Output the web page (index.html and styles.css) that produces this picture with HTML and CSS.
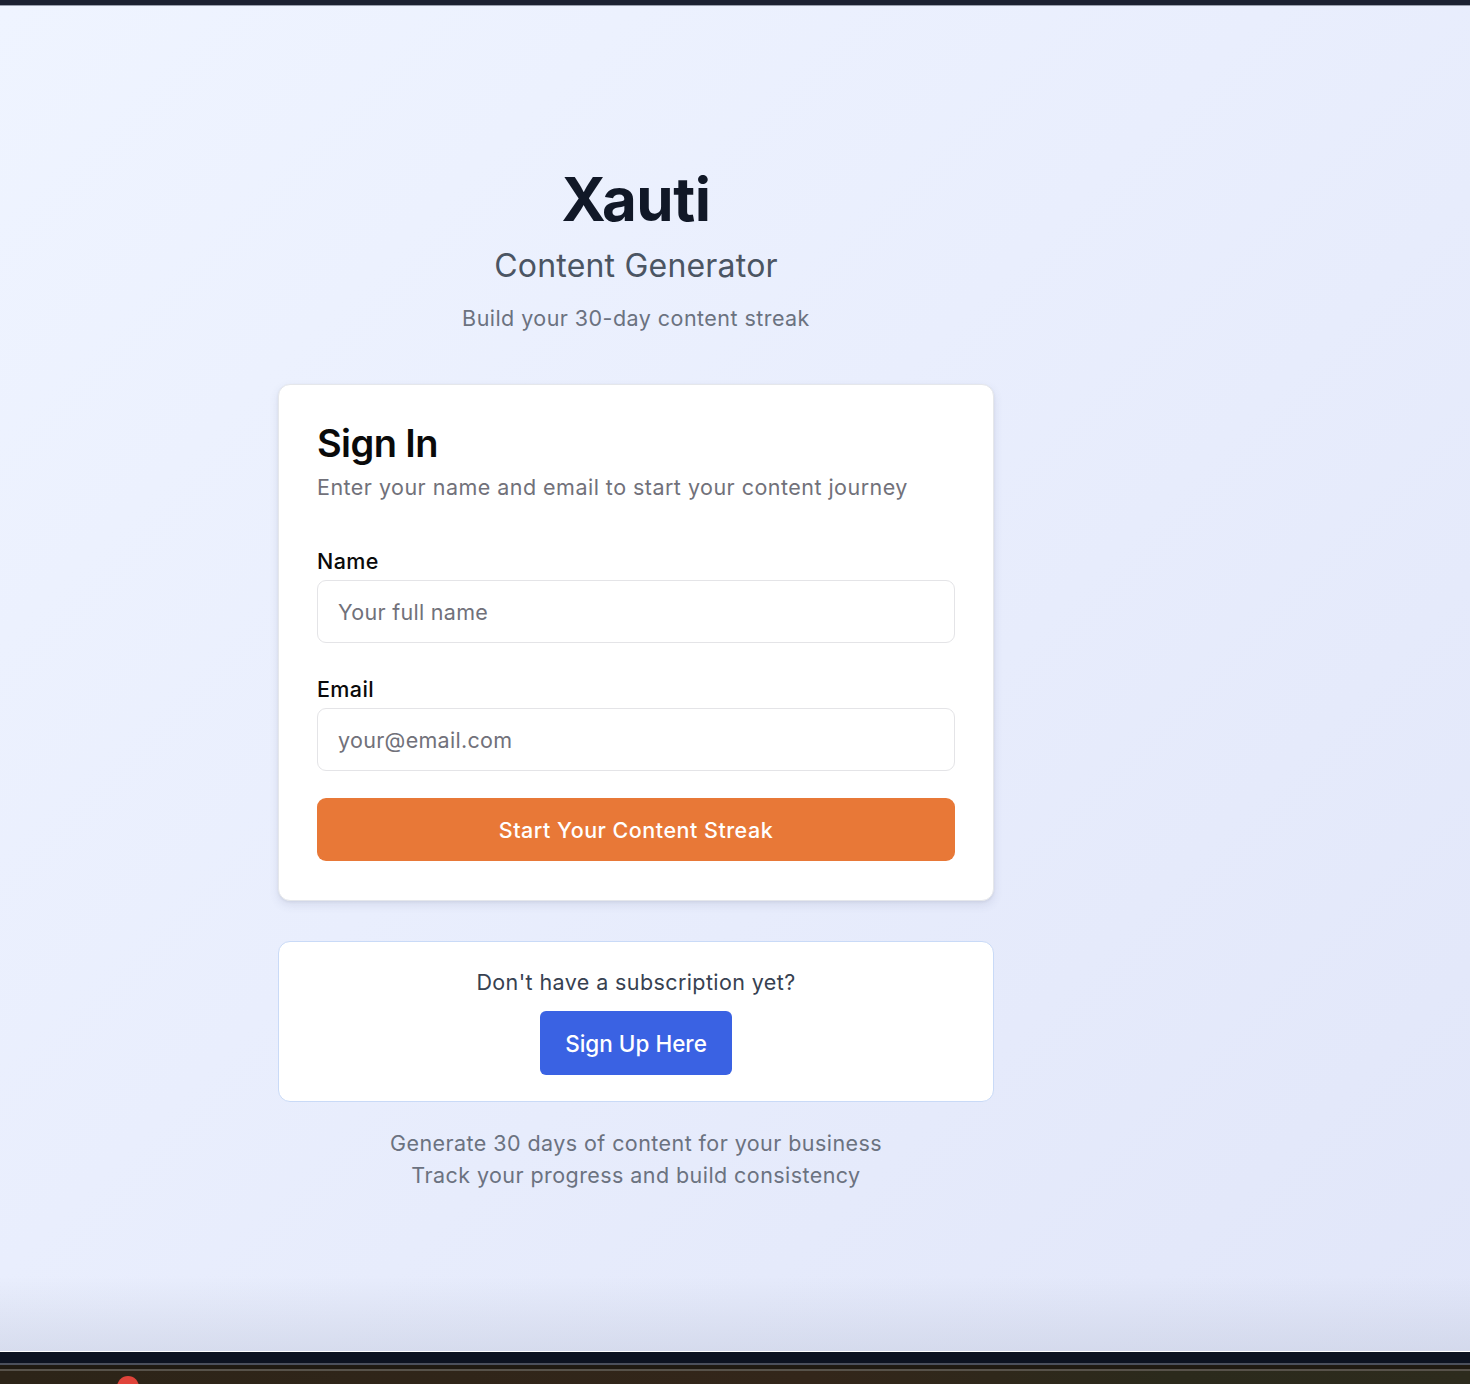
FILE: index.html
```html
<!DOCTYPE html>
<html lang="en">
<head>
<meta charset="utf-8">
<title>Xauti – Sign In</title>
<link rel="stylesheet" href="styles.css">
</head>
<body>
<div class="topbar"></div>
<main class="page">
  <div class="column">
    <header class="brand">
      <h1 class="brand-title">Xauti</h1>
      <p class="brand-sub">Content Generator</p>
      <p class="brand-tag">Build your 30-day content streak</p>
    </header>

    <section class="card">
      <h2 class="card-title">Sign In</h2>
      <p class="card-desc">Enter your name and email to start your content journey</p>
      <form class="form">
        <div class="field">
          <label class="label" for="name">Name</label>
          <input class="input" id="name" type="text" placeholder="Your full name">
        </div>
        <div class="field">
          <label class="label" for="email">Email</label>
          <input class="input" id="email" type="email" placeholder="your@email.com">
        </div>
        <button class="btn-primary" type="button">Start Your Content Streak</button>
      </form>
    </section>

    <section class="signup">
      <p class="signup-text">Don't have a subscription yet?</p>
      <button class="btn-blue" type="button">Sign Up Here</button>
    </section>

    <footer class="foot">
      <p>Generate 30 days of content for your business</p>
      <p>Track your progress and build consistency</p>
    </footer>
  </div>
</main>
<div class="os-bottom">
  <div class="os-navy"></div>
  <div class="os-line"></div>
  <div class="os-dark"></div>
  <div class="os-dock"><span class="dock-dot"></span></div>
</div>
</body>
</html>
```

FILE: styles.css
```css
* { box-sizing: border-box; }
html, body { margin: 0; padding: 0; }
body {
  width: 1470px;
  height: 1384px;
  overflow: hidden;
  font-family: Inter, "Noto Sans", "Liberation Sans", sans-serif;
  display: flex;
  flex-direction: column;
  background: #0d1321;
}
.topbar {
  height: 6px;
  background: #1c2131;
  border-bottom: 1px solid #9aa0ae;
  flex: none;
}
.page {
  flex: none;
  height: 1346px;
  background:
    linear-gradient(to bottom, rgba(200,206,225,0) 0, rgba(200,206,225,0) 1270px, rgba(200,206,225,0.55) 1346px),
    linear-gradient(135deg, #eff4ff 0%, #e9eefd 45%, #e1e6f9 100%);
  border-bottom: 1px solid #ffffff;
}
.column {
  width: 716px;
  margin-left: 278px;
  padding-top: 157px;
  display: flex;
  flex-direction: column;
}
.brand { text-align: center; }
.brand-title {
  margin: 0;
  font-size: 60px;
  line-height: 72px;
  font-weight: 700;
  color: #111827;
  letter-spacing: -0.5px;
}
.brand-sub {
  margin: 0;
  margin-top: 11px;
  font-size: 32px;
  line-height: 40px;
  color: #4b5563;
  font-weight: 400;
  letter-spacing: 0.2px;
}
.brand-tag {
  margin: 0;
  margin-top: 18px;
  font-size: 21.5px;
  line-height: 28px;
  color: #6b7280;
  letter-spacing: 0.45px;
}
.card {
  margin-top: 52px;
  background: #ffffff;
  border: 1px solid #e5e7eb;
  border-radius: 12px;
  box-shadow: 0 4px 10px rgba(70, 80, 120, 0.12), 0 1px 3px rgba(0,0,0,0.06);
  padding: 35px 38px 39px 38px;
}
.card-title {
  margin: 0;
  font-size: 38px;
  line-height: 46px;
  font-weight: 600;
  color: #0a0a0a;
  letter-spacing: -0.6px;
}
.card-desc {
  margin: 0;
  margin-top: 5px;
  font-size: 21.5px;
  line-height: 32px;
  color: #71717a;
  letter-spacing: 0.47px;
}
.form {
  margin-top: 44px;
  display: flex;
  flex-direction: column;
}
.field {
  display: flex;
  flex-direction: column;
  gap: 5px;
  margin-bottom: 32px;
}
.field + .field { margin-bottom: 27px; }
.label {
  font-size: 21.5px;
  line-height: 28px;
  font-weight: 500;
  color: #0a0a0a;
  letter-spacing: 0.4px;
}
.input {
  height: 63px;
  border: 1px solid #e4e4e7;
  border-radius: 9px;
  padding: 0 20px;
  font-family: inherit;
  font-size: 21.5px;
  color: #0a0a0a;
  background: #ffffff;
  outline: none;
  letter-spacing: 0.3px;
}
.input::placeholder { color: #71717a; }
.btn-primary {
  height: 63px;
  border: none;
  border-radius: 9px;
  background: #e87837;
  color: #ffffff;
  font-family: inherit;
  font-size: 21.5px;
  font-weight: 500;
  letter-spacing: 0.5px;
}
.signup {
  margin-top: 40px;
  background: #ffffff;
  border: 1px solid #c9daf7;
  border-radius: 12px;
  padding: 25px 0 26px;
  display: flex;
  flex-direction: column;
  align-items: center;
}
.signup-text {
  margin: 0;
  font-size: 21.5px;
  line-height: 30px;
  color: #374151;
  letter-spacing: 0.4px;
}
.btn-blue {
  margin-top: 14px;
  width: 192px;
  height: 64px;
  border: none;
  border-radius: 6px;
  background: #3a62e3;
  color: #ffffff;
  font-family: inherit;
  font-size: 22.5px;
  font-weight: 500;
}
.foot {
  margin-top: 25px;
  text-align: center;
  color: #6b7280;
  font-size: 21.5px;
  line-height: 32px;
  letter-spacing: 0.43px;
}
.foot p { margin: 0; }
.os-bottom {
  flex: 1;
  display: flex;
  flex-direction: column;
}
.os-navy { height: 11px; background: #0d1321; }
.os-line { height: 2px; background: #4b505c; }
.os-dark { height: 4px; background: #1f1a12; }
.os-dock {
  flex: 1;
  background: linear-gradient(90deg, #2c2418 0%, #33261a 55%, #2b2a1c 80%, #2d2b1d 100%);
  border-top: 2px solid #57524a;
  position: relative;
}
.dock-dot {
  position: absolute;
  left: 117px;
  top: 5px;
  width: 22px;
  height: 22px;
  border-radius: 50%;
  background: #e0443a;
}
```
